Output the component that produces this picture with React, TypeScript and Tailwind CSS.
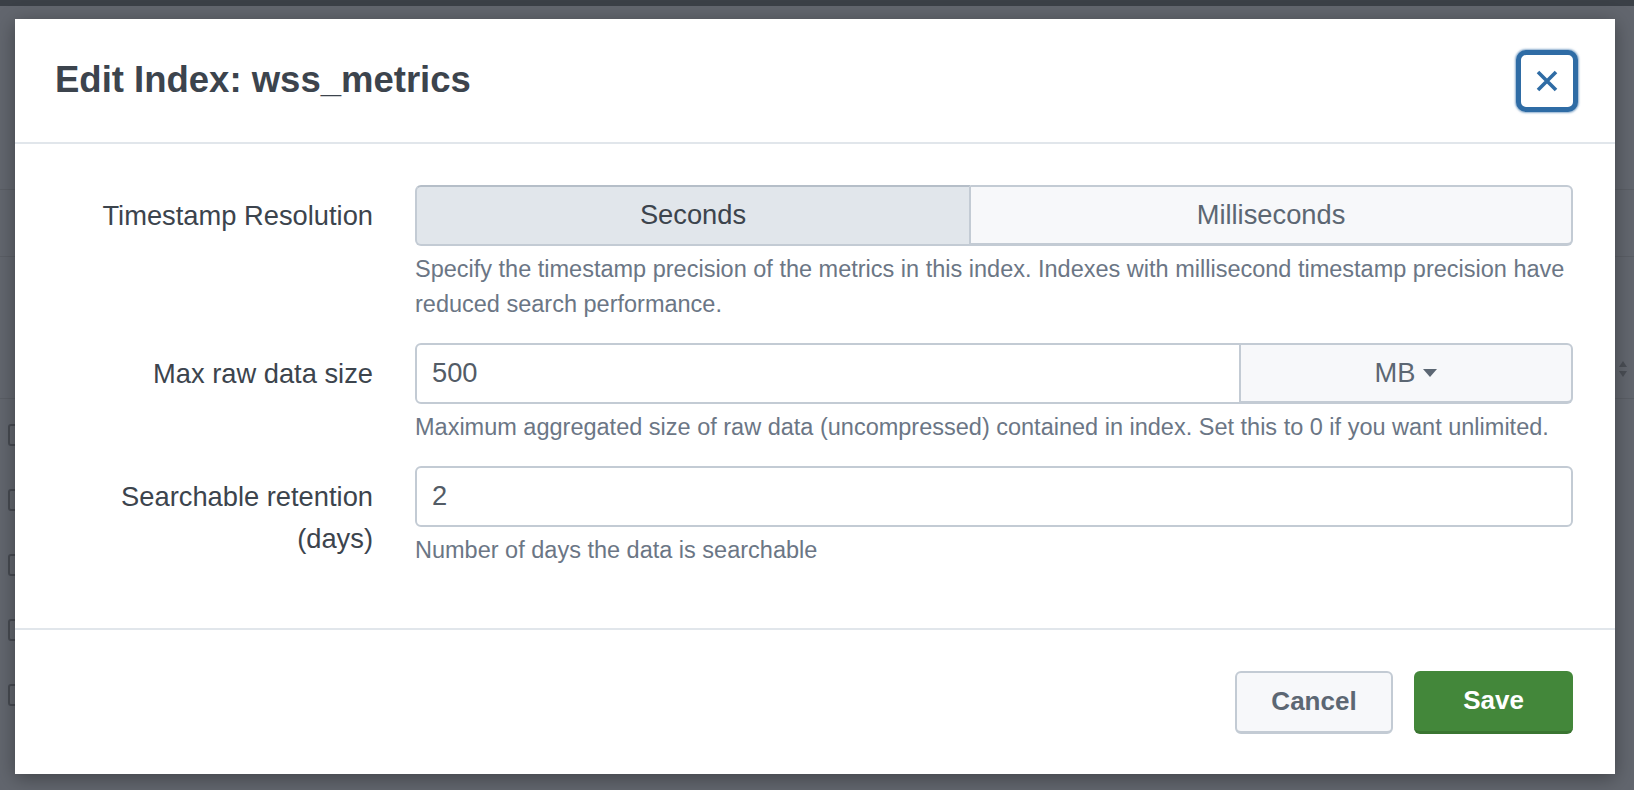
import React from "react";

function Checkbox() {
  return <div className="h-[22px] w-[18px] rounded-[3px] border-2 border-[#474b52]" />;
}

export default function App() {
  return (
    <div className="relative h-[790px] w-[1634px] overflow-hidden bg-[#62666e] font-['Liberation_Sans',Arial,sans-serif]">
      {/* dimmed page beneath the modal */}
      <div className="flex flex-col">
        <div className="h-[6px] bg-[#3b4047]" />
        <div className="h-[184px] border-b border-[#5a5e65]" />
        <div className="h-[67px] border-b border-[#5a5e65]" />
        <div className="flex h-[142px] items-start justify-end border-b border-[#5a5e65] pr-[6px] pt-[103px]">
          <svg width="10" height="18" viewBox="0 0 10 18">
            <path d="M5 1 L9 7 H1 Z" fill="#4a4e55" />
            <path d="M5 17 L9 11 H1 Z" fill="#4a4e55" />
          </svg>
        </div>
        <div className="mt-[3px] flex flex-col">
          {[0, 1, 2, 3, 4].map((i) => (
            <div key={i} className="flex h-[65px] items-center pl-[8px]">
              <Checkbox />
            </div>
          ))}
        </div>
      </div>

      {/* modal */}
      <div className="absolute left-[15px] top-[19px] flex h-[755px] w-[1600px] flex-col bg-white shadow-[0_4px_18px_rgba(0,0,0,0.35)]">
        {/* header */}
        <div className="flex h-[125px] items-center justify-between border-b-2 border-[#e1e6eb] pl-[40px] pr-[37px]">
          <h1 className="text-[36.5px] font-bold leading-none text-[#3c444d]">Edit Index: wss_metrics</h1>
          <button className="flex h-[62px] w-[62px] items-center justify-center rounded-[10px] border-[5px] border-[#2f6ca5] bg-white shadow-[0_0_2px_1px_rgba(47,108,165,0.55)]">
            <svg width="24" height="24" viewBox="0 0 24 24">
              <path d="M3 3 L21 21 M21 3 L3 21" stroke="#2f6ca5" strokeWidth="3.6" strokeLinecap="butt" />
            </svg>
          </button>
        </div>

        {/* body */}
        <div className="flex flex-1 flex-col gap-[21px] pl-[40px] pr-[42px] pt-[41px]">
          {/* row 1 */}
          <div className="flex">
            <div className="w-[318px] pt-[10px] text-right text-[27.3px] leading-[42px] text-[#3c444d]">Timestamp Resolution</div>
            <div className="ml-[42px] flex flex-1 flex-col">
              <div className="flex h-[61px]">
                <button className="flex w-[556px] items-center justify-center rounded-l-[6px] border-2 border-[#c3cbd4] border-t-[#b5bec8] bg-[#e1e6eb] text-[27.3px] text-[#3c444d]">
                  Seconds
                </button>
                <button className="flex flex-1 items-center justify-center rounded-r-[6px] border-2 border-b-[3px] border-l-0 border-[#c3cbd4] bg-[#f7f8fa] text-[27.3px] text-[#5c6773]">
                  Milliseconds
                </button>
              </div>
              <p className="mt-[6px] text-[23.5px] leading-[35px] text-[#6b7685]">
                Specify the timestamp precision of the metrics in this index. Indexes with millisecond timestamp precision have reduced search performance.
              </p>
            </div>
          </div>

          {/* row 2 */}
          <div className="flex">
            <div className="w-[318px] pt-[10px] text-right text-[27.3px] leading-[42px] text-[#3c444d]">Max raw data size</div>
            <div className="ml-[42px] flex flex-1 flex-col">
              <div className="flex h-[61px]">
                <div className="flex flex-1 items-center rounded-l-[6px] border-2 border-[#c3cbd4] pl-[15px] text-[27.3px] text-[#535c66]">500</div>
                <button className="flex w-[332px] items-center justify-center gap-[8px] rounded-r-[6px] border-2 border-b-[3px] border-l-0 border-[#c3cbd4] bg-[#f7f8fa] text-[27.3px] text-[#5c6773]">
                  <span>MB</span>
                  <svg width="14" height="8" viewBox="0 0 14 8">
                    <path d="M0 0 H14 L7 8 Z" fill="#5c6773" />
                  </svg>
                </button>
              </div>
              <p className="mt-[6px] text-[23.5px] leading-[35px] text-[#6b7685]">
                Maximum aggregated size of raw data (uncompressed) contained in index. Set this to 0 if you want unlimited.
              </p>
            </div>
          </div>

          {/* row 3 */}
          <div className="flex">
            <div className="w-[318px] pt-[10px] text-right text-[27.3px] leading-[42px] text-[#3c444d]">
              Searchable retention
              <br />
              (days)
            </div>
            <div className="ml-[42px] flex flex-1 flex-col">
              <div className="flex h-[61px] items-center rounded-[6px] border-2 border-[#c3cbd4] pl-[15px] text-[27.3px] text-[#535c66]">2</div>
              <p className="mt-[6px] text-[23.5px] leading-[35px] text-[#6b7685]">Number of days the data is searchable</p>
            </div>
          </div>
        </div>

        {/* footer */}
        <div className="flex h-[146px] items-center justify-end gap-[21px] border-t-2 border-[#e1e6eb] pr-[42px]">
          <button className="h-[63px] w-[158px] rounded-[6px] border-2 border-b-[3px] border-[#c3cbd4] bg-[#f7f8fa] text-[26px] font-bold text-[#5c6773]">
            Cancel
          </button>
          <button className="h-[63px] w-[159px] rounded-[6px] border-b-[3px] border-[#3a7531] bg-[#43873a] text-[26px] font-bold text-white">
            Save
          </button>
        </div>
      </div>
    </div>
  );
}
